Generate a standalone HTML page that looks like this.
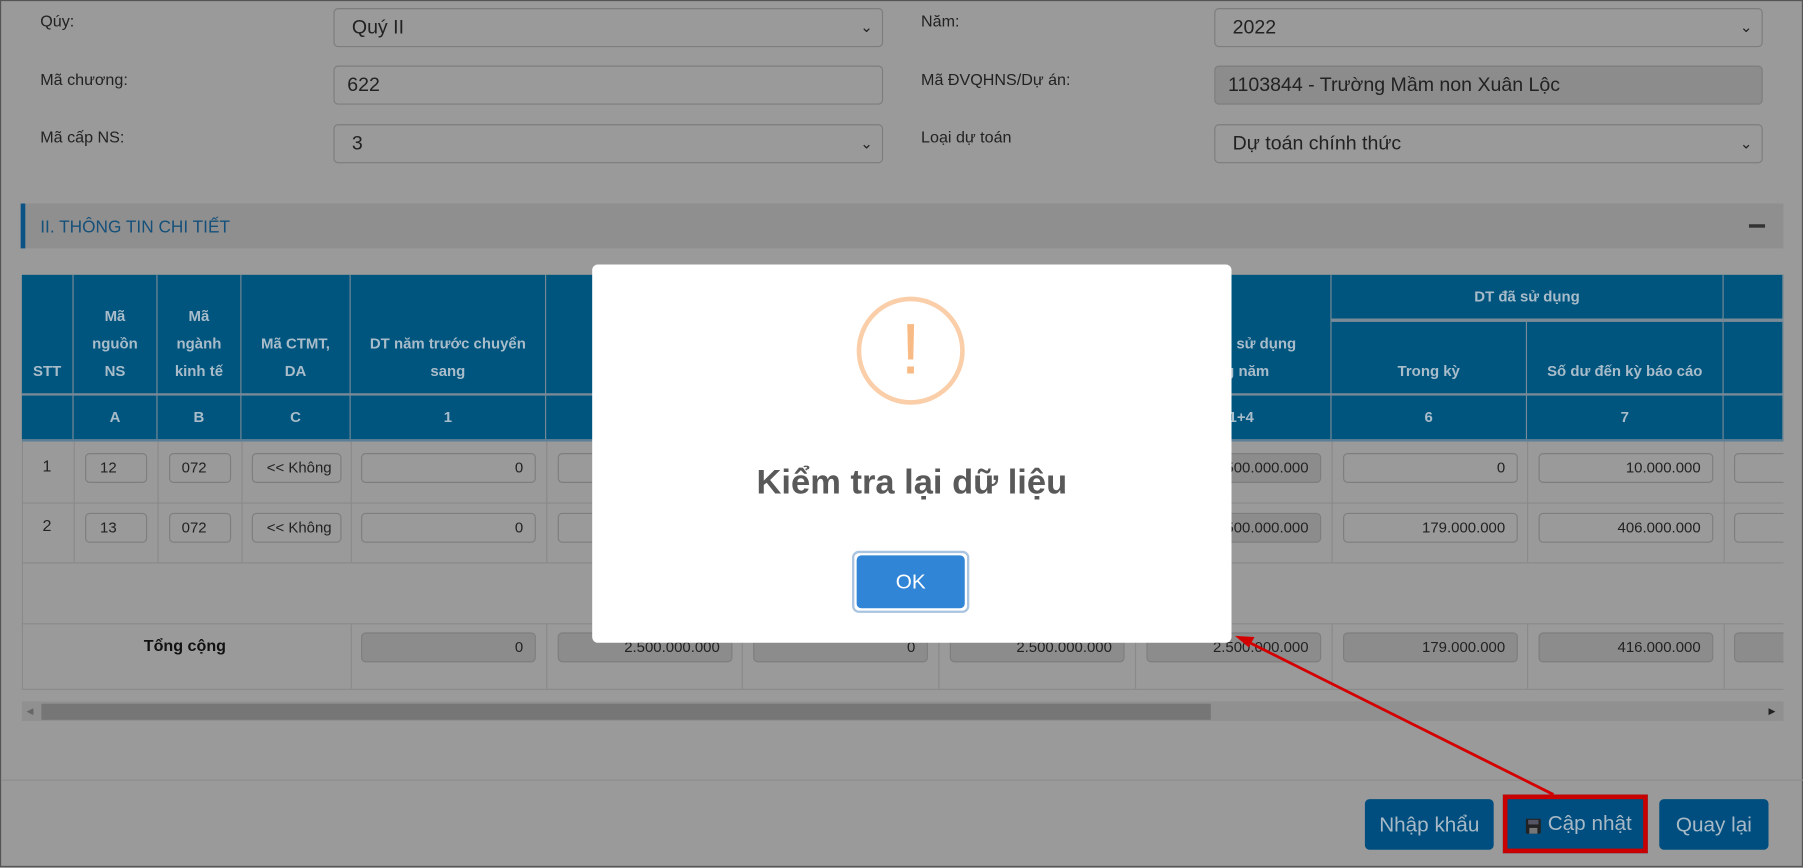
<!DOCTYPE html>
<html><head><meta charset="utf-8">
<style>
html,body{margin:0;padding:0;width:1803px;height:867px;overflow:hidden;background:#9a9a9a;}
#w{position:absolute;left:0;top:0;width:1568px;height:754px;transform:scale(1.14987);transform-origin:0 0;font-family:"Liberation Sans",Arial,sans-serif;background:#9a9a9a;border:1px solid #555;box-sizing:border-box;}
.a{position:absolute;}
.lbl{font-size:14px;color:#222;}
.sel{position:absolute;height:34px;border:1px solid #7d7d7d;border-radius:4px;box-sizing:border-box;background:#9a9a9a;font-size:17px;color:#222;padding:0 15px;line-height:32px;}
.sel .chev{position:absolute;right:8px;top:0;font-size:13px;}
.th{position:absolute;background:#00557f;color:#a9bcc9;font-weight:bold;font-size:13px;text-align:center;display:flex;align-items:center;justify-content:center;line-height:24px;box-sizing:border-box;border-right:1px solid #7a8a96;}
.vl{position:absolute;width:1px;background:#8a8a8a;}
.hl{position:absolute;height:1px;background:#8a8a8a;}
.in{position:absolute;height:26px;border:1px solid #7e7e7e;border-radius:4px;box-sizing:border-box;font-size:13px;color:#222;line-height:24px;padding:0 10px;background:#9a9a9a;overflow:hidden;white-space:nowrap;}
.r{text-align:right;}
.dis{background:#8c8c8c;}
.btn{position:absolute;top:694px;height:44px;background:#004e7f;color:#a7b9c6;font-size:18px;line-height:44px;text-align:center;border-radius:4px;}
#clip{position:absolute;left:0;top:0;width:1550px;height:754px;overflow:hidden;}
</style></head><body>
<div id="w">
<div class="a lbl" style="left:34px;top:9px">Qúy:</div>
<div class="a lbl" style="left:34px;top:60px">Mã chương:</div>
<div class="a lbl" style="left:34px;top:110px">Mã cấp NS:</div>
<div class="sel" style="left:289px;top:6px;width:478px">Quý II<span class="chev">&#8964;</span></div>
<div class="sel" style="left:289px;top:56px;width:478px;padding-left:11px">622</div>
<div class="sel" style="left:289px;top:107px;width:478px">3<span class="chev">&#8964;</span></div>
<div class="a lbl" style="left:800px;top:9px">Năm:</div>
<div class="a lbl" style="left:800px;top:60px">Mã ĐVQHNS/Dự án:</div>
<div class="a lbl" style="left:800px;top:110px">Loại dự toán</div>
<div class="sel" style="left:1055px;top:6px;width:477px">2022<span class="chev">&#8964;</span></div>
<div class="sel dis" style="left:1055px;top:56px;width:477px;padding-left:11px">1103844 - Trường Mầm non Xuân Lộc</div>
<div class="sel" style="left:1055px;top:107px;width:477px">Dự toán chính thức<span class="chev">&#8964;</span></div>

<div class="a" style="left:17px;top:176px;width:1533px;height:39px;background:#8f8f8f;border-left:4px solid #0a5384;box-sizing:border-box"></div>
<div class="a" style="left:34px;top:188px;font-size:15px;color:#15507a">II. THÔNG TIN CHI TIẾT</div>
<div class="a" style="left:1520px;top:194px;width:14px;height:3px;background:#333"></div>

<div id="clip">
<div class="th" style="left:18px;top:238px;width:45px;height:104px;align-items:flex-end;padding-bottom:8px">STT</div>
<div class="th" style="left:63px;top:238px;width:73px;height:104px;align-items:flex-end;padding-bottom:8px">Mã<br>nguồn<br>NS</div>
<div class="th" style="left:136px;top:238px;width:73px;height:104px;align-items:flex-end;padding-bottom:8px">Mã<br>ngành<br>kinh tế</div>
<div class="th" style="left:209px;top:238px;width:95px;height:104px;align-items:flex-end;padding-bottom:8px">Mã CTMT,<br>DA</div>
<div class="th" style="left:304px;top:238px;width:170px;height:104px;align-items:flex-end;padding-bottom:8px">DT năm trước chuyển<br>sang</div>
<div class="th" style="left:474px;top:238px;width:170px;height:104px;align-items:flex-end;padding-bottom:8px">Dự toán</div>
<div class="th" style="left:644px;top:238px;width:171px;height:104px"></div>
<div class="th" style="left:815px;top:238px;width:171px;height:104px"></div>
<div class="th" style="left:986px;top:238px;width:171px;height:104px;align-items:flex-end;padding-bottom:8px">DT được sử dụng<br>trong năm</div>
<div class="th" style="left:1157px;top:238px;width:341px;height:41px;border-bottom:3px solid #7a8a96">DT đã sử dụng</div>
<div class="th" style="left:1157px;top:279px;width:170px;height:63px;align-items:flex-end;padding-bottom:8px">Trong kỳ</div>
<div class="th" style="left:1327px;top:279px;width:171px;height:63px;align-items:flex-end;padding-bottom:8px">Số dư đến kỳ báo cáo</div>
<div class="th" style="left:1498px;top:238px;width:52px;height:41px;border-bottom:3px solid #7a8a96"></div>
<div class="th" style="left:1498px;top:279px;width:52px;height:63px"></div>
<div class="a" style="left:18px;top:341px;width:1532px;height:2px;background:#7a8a96"></div>
<div class="th" style="left:18px;top:343px;width:45px;height:38px"></div>
<div class="th" style="left:63px;top:343px;width:73px;height:38px">A</div>
<div class="th" style="left:136px;top:343px;width:73px;height:38px">B</div>
<div class="th" style="left:209px;top:343px;width:95px;height:38px">C</div>
<div class="th" style="left:304px;top:343px;width:170px;height:38px">1</div>
<div class="th" style="left:474px;top:343px;width:170px;height:38px">2</div>
<div class="th" style="left:644px;top:343px;width:171px;height:38px">3</div>
<div class="th" style="left:815px;top:343px;width:171px;height:38px">4</div>
<div class="th" style="left:986px;top:343px;width:171px;height:38px">5=1+4</div>
<div class="th" style="left:1157px;top:343px;width:170px;height:38px">6</div>
<div class="th" style="left:1327px;top:343px;width:171px;height:38px">7</div>
<div class="th" style="left:1498px;top:343px;width:52px;height:38px"></div>
<div class="a" style="left:18px;top:381px;width:1532px;height:2px;background:#5d7f97"></div>

<div class="hl" style="left:18px;top:436px;width:1532px"></div>
<div class="hl" style="left:18px;top:488px;width:1532px"></div>
<div class="hl" style="left:18px;top:541px;width:1532px"></div>
<div class="hl" style="left:18px;top:598px;width:1532px"></div>
<div class="vl" style="left:18px;top:383px;height:215px"></div>
<div class="vl" style="left:63px;top:383px;height:105px"></div>
<div class="vl" style="left:136px;top:383px;height:105px"></div>
<div class="vl" style="left:209px;top:383px;height:105px"></div>
<div class="vl" style="left:304px;top:383px;height:105px"></div>
<div class="vl" style="left:304px;top:541px;height:57px"></div>
<div class="vl" style="left:474px;top:383px;height:105px"></div><div class="vl" style="left:474px;top:541px;height:57px"></div>
<div class="vl" style="left:644px;top:383px;height:105px"></div><div class="vl" style="left:644px;top:541px;height:57px"></div>
<div class="vl" style="left:815px;top:383px;height:105px"></div><div class="vl" style="left:815px;top:541px;height:57px"></div>
<div class="vl" style="left:986px;top:383px;height:105px"></div><div class="vl" style="left:986px;top:541px;height:57px"></div>
<div class="vl" style="left:1157px;top:383px;height:105px"></div><div class="vl" style="left:1157px;top:541px;height:57px"></div>
<div class="vl" style="left:1327px;top:383px;height:105px"></div><div class="vl" style="left:1327px;top:541px;height:57px"></div>
<div class="vl" style="left:1498px;top:383px;height:105px"></div><div class="vl" style="left:1498px;top:541px;height:57px"></div>

<div class="a" style="left:36px;top:396px;font-size:14px;color:#222">1</div>
<div class="a" style="left:36px;top:448px;font-size:14px;color:#222">2</div>
<div class="in" style="left:73px;top:393px;width:54px;padding:0 12px">12</div>
<div class="in" style="left:146px;top:393px;width:54px">072</div>
<div class="in" style="left:218px;top:393px;width:78px;padding:0 12px">&lt;&lt; Không</div>
<div class="in r" style="left:313px;top:393px;width:152px">0</div>
<div class="in r" style="left:484px;top:393px;width:152px">2.500.000.000</div>
<div class="in r dis" style="left:996px;top:393px;width:152px">2.500.000.000</div>
<div class="in r" style="left:1167px;top:393px;width:152px">0</div>
<div class="in r" style="left:1337px;top:393px;width:152px">10.000.000</div>
<div class="in" style="left:1507px;top:393px;width:60px"></div>
<div class="in" style="left:73px;top:445px;width:54px;padding:0 12px">13</div>
<div class="in" style="left:146px;top:445px;width:54px">072</div>
<div class="in" style="left:218px;top:445px;width:78px;padding:0 12px">&lt;&lt; Không</div>
<div class="in r" style="left:313px;top:445px;width:152px">0</div>
<div class="in r" style="left:484px;top:445px;width:152px">0</div>
<div class="in r dis" style="left:996px;top:445px;width:152px">2.500.000.000</div>
<div class="in r" style="left:1167px;top:445px;width:152px">179.000.000</div>
<div class="in r" style="left:1337px;top:445px;width:152px">406.000.000</div>
<div class="in" style="left:1507px;top:445px;width:60px"></div>

<div class="a" style="left:124px;top:552px;font-size:14px;font-weight:bold;color:#111">Tổng cộng</div>
<div class="in r dis" style="left:313px;top:549px;width:152px">0</div>
<div class="in r dis" style="left:484px;top:549px;width:152px">2.500.000.000</div>
<div class="in r dis" style="left:654px;top:549px;width:152px">0</div>
<div class="in r dis" style="left:825px;top:549px;width:152px">2.500.000.000</div>
<div class="in r dis" style="left:996px;top:549px;width:152px">2.500.000.000</div>
<div class="in r dis" style="left:1167px;top:549px;width:152px">179.000.000</div>
<div class="in r dis" style="left:1337px;top:549px;width:152px">416.000.000</div>
<div class="in dis" style="left:1507px;top:549px;width:60px"></div>
</div>

<div class="a" style="left:18px;top:609px;width:1532px;height:17px;background:#909090"></div>
<div class="a" style="left:35px;top:611px;width:1017px;height:14px;background:#767676"></div>
<div class="a" style="left:22px;top:613px;font-size:8px;color:#666">&#9664;</div>
<div class="a" style="left:1537px;top:613px;font-size:8px;color:#222">&#9654;</div>

<div class="hl" style="left:0;top:677px;width:1568px;background:#8e8e8e"></div>

<div class="btn" style="left:1186px;width:112px">Nhập khẩu</div>
<div class="a" style="left:1306px;top:690px;width:126px;height:51px;border:4px solid #c80000;box-sizing:border-box;background:#004e7f"></div>
<div class="a" style="left:1326px;top:711px;width:13px;height:13px;background:#222;border-radius:1px"><div style="position:absolute;left:2px;top:1px;width:9px;height:4px;background:#556"></div><div style="position:absolute;left:3px;top:8px;width:7px;height:5px;background:#777"></div></div>
<div class="a" style="left:1345px;top:705px;font-size:18px;color:#a7b9c6">Cập nhật</div>
<div class="btn" style="left:1442px;width:95px">Quay lại</div>

<svg class="a" style="left:0;top:0" width="1568" height="754">
<line x1="1350" y1="690" x2="1082" y2="556" stroke="#d40000" stroke-width="2.5"/>
<polygon points="1073,552 1090,553 1085,562" fill="#d40000"/>
</svg>

<div class="a" style="left:514px;top:229px;width:556px;height:329px;background:#fff;border-radius:5px">
<div class="a" style="left:230px;top:28px;width:86px;height:86px;border:4px solid #facea8;border-radius:50%;text-align:center;font-size:62px;line-height:86px;color:#f8bb86">!</div>
<div class="a" style="left:0;top:173px;width:556px;text-align:center;font-size:30px;font-weight:bold;color:#595959">Kiểm tra lại dữ liệu</div>
<div class="a" style="left:226px;top:249px;width:102px;height:54px;border:2px solid #a9c4e0;border-radius:6px;box-sizing:border-box;padding:2px"><div style="background:#3085d6;border-radius:4px;height:46px;color:#fff;font-size:18px;line-height:46px;text-align:center">OK</div></div>
</div>
</div>
</body></html>
